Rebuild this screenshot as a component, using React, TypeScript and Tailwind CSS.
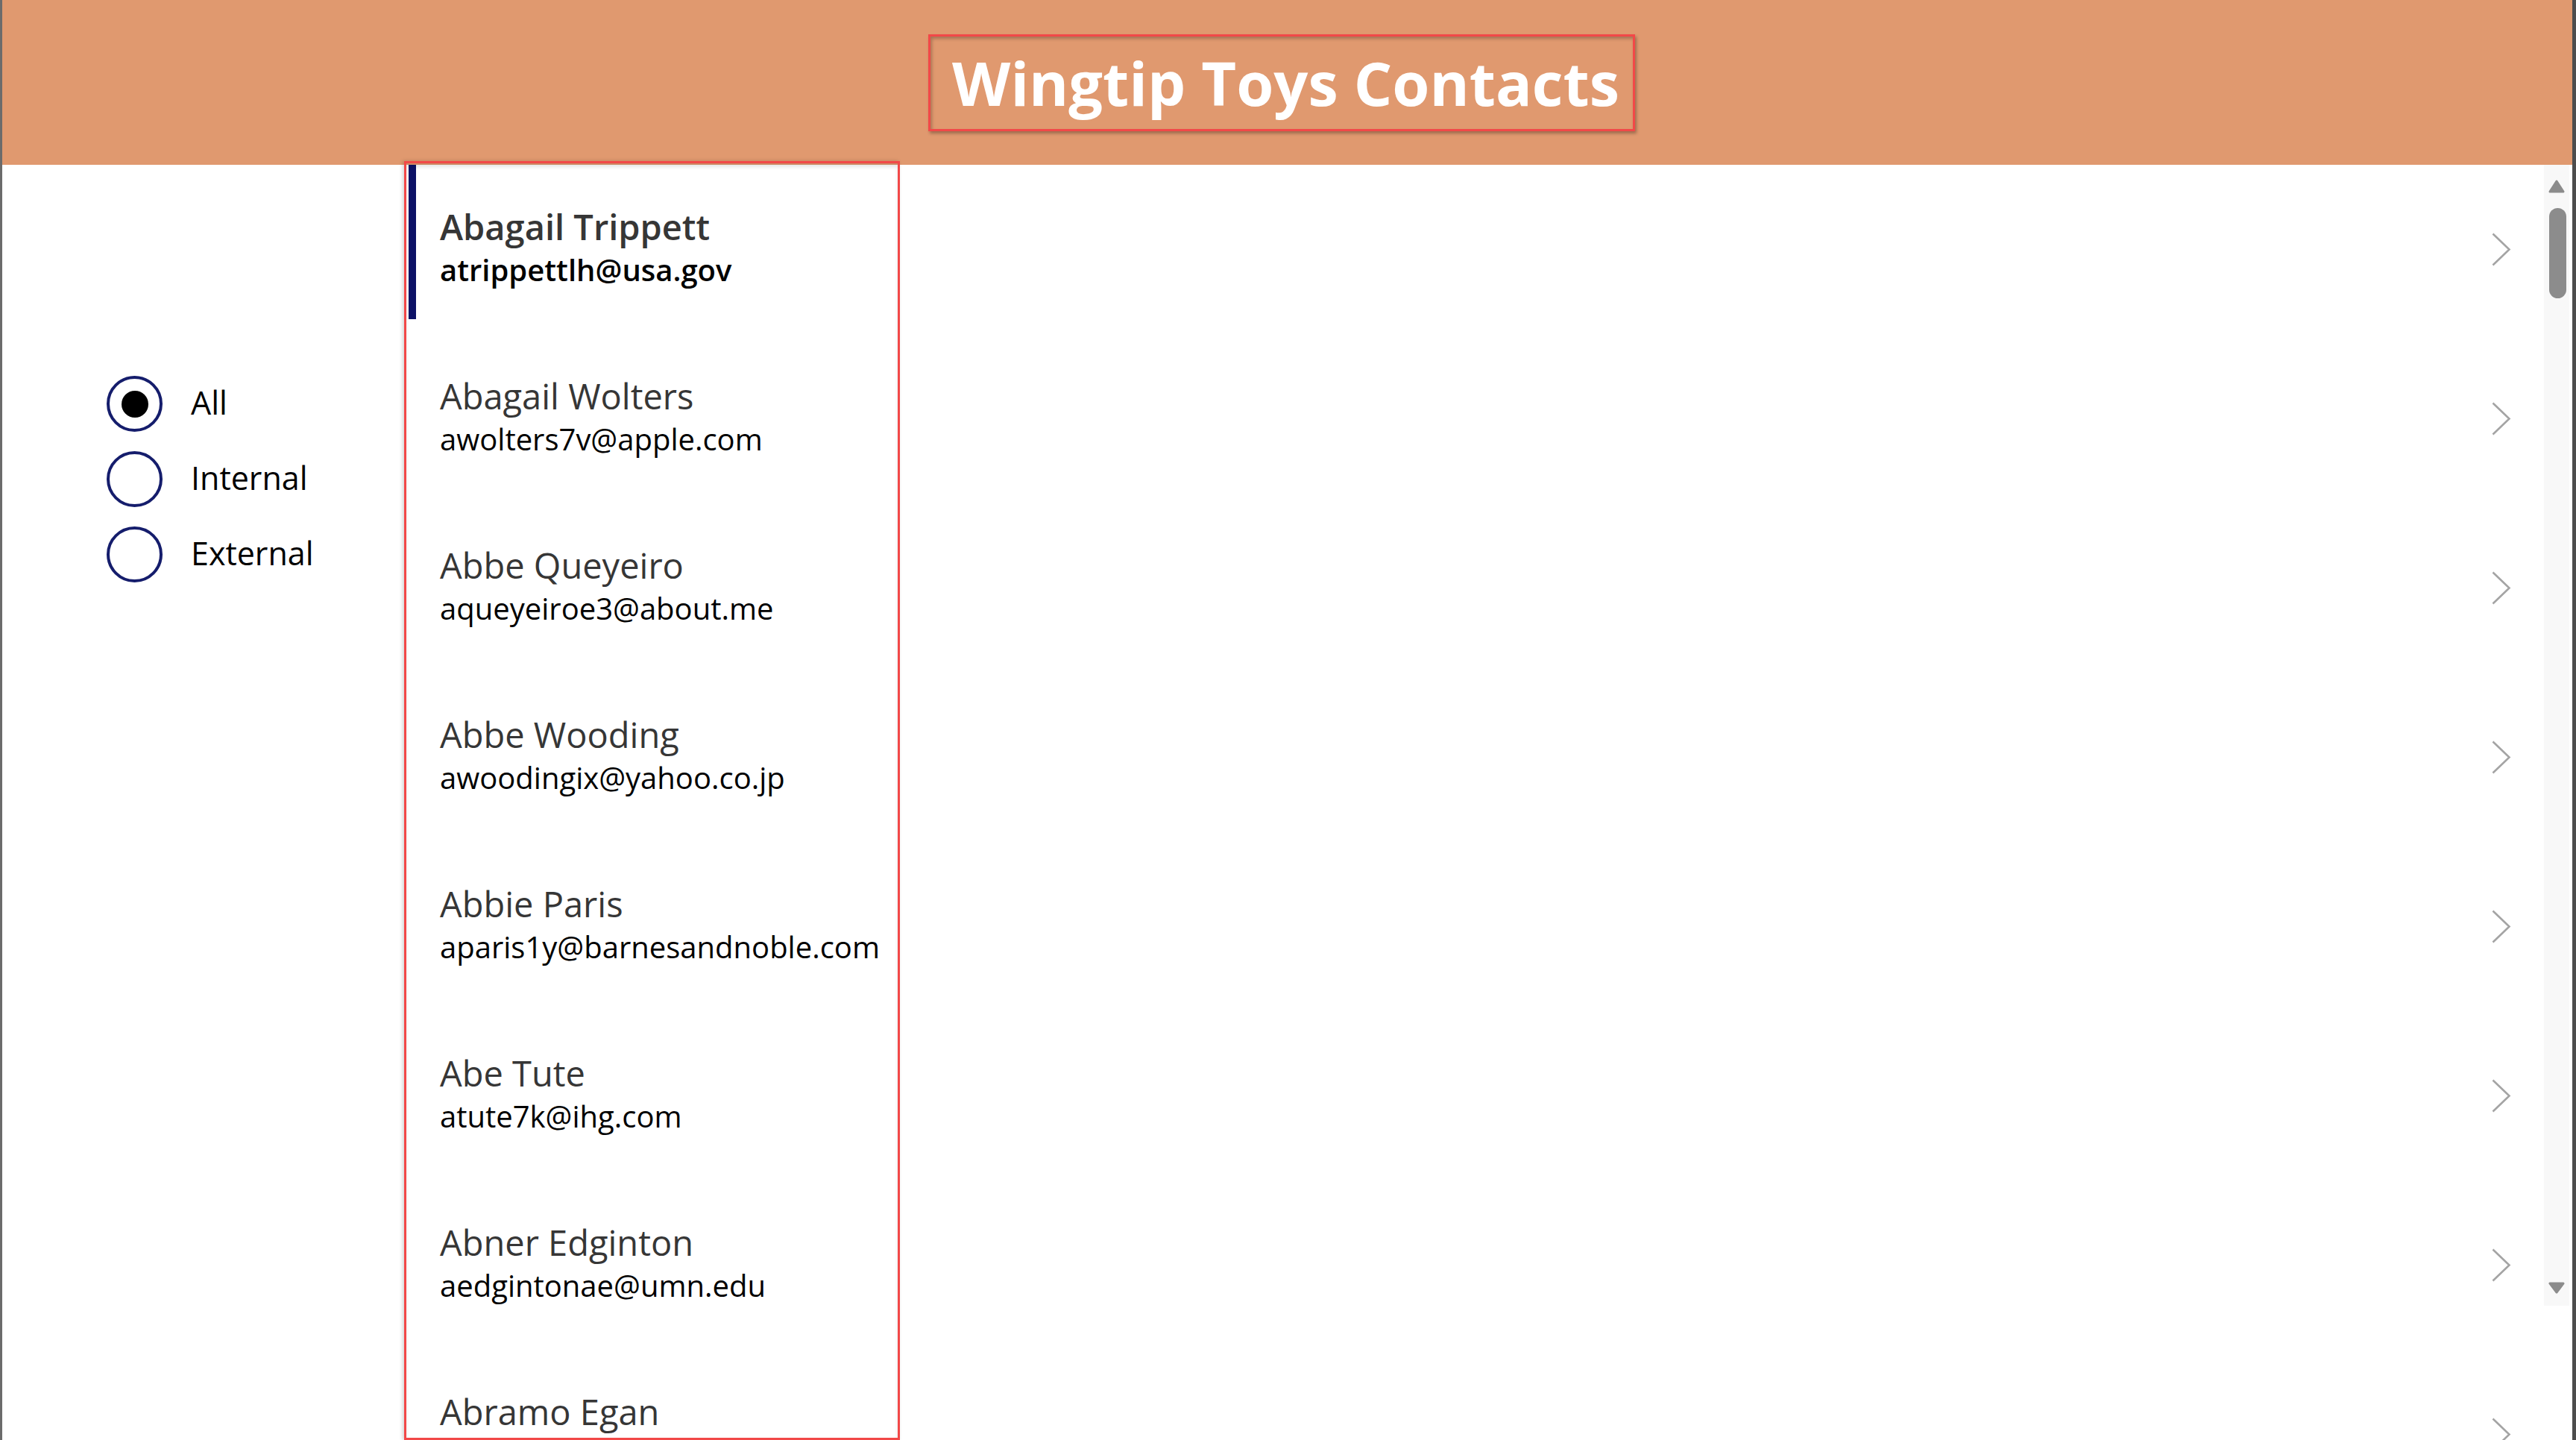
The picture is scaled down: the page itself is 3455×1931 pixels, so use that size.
const contacts = [
  { name: "Abagail Trippett", email: "atrippettlh@usa.gov" },
  { name: "Abagail Wolters", email: "awolters7v@apple.com" },
  { name: "Abbe Queyeiro", email: "aqueyeiroe3@about.me" },
  { name: "Abbe Wooding", email: "awoodingix@yahoo.co.jp" },
  { name: "Abbie Paris", email: "aparis1y@barnesandnoble.com" },
  { name: "Abe Tute", email: "atute7k@ihg.com" },
  { name: "Abner Edginton", email: "aedgintonae@umn.edu" },
  { name: "Abramo Egan", email: "aeganqq@wikimedia.org" },
];

const filters = ["All", "Internal", "External"];

function Chevron() {
  return (
    <svg width="26" height="45" viewBox="0 0 26 45" fill="none">
      <polyline points="1.5,1.5 23.5,22.5 1.5,43.5" stroke="#a4a4a4" strokeWidth="2.6" />
    </svg>
  );
}

function RadioGroup() {
  return (
    <div className="flex w-[539px] shrink-0 flex-col pl-[140px] pt-[270px]">
      {filters.map((label, i) => (
        <div key={label} className="flex h-[101px] items-center gap-[38px]">
          <div className="flex h-[75px] w-[75px] items-center justify-center rounded-full border-[4px] border-[#151d6c]">
            {i === 0 && <div className="h-[36px] w-[36px] rounded-full bg-black" />}
          </div>
          <span className="pb-[4px] text-[43px] leading-[59px] text-black">{label}</span>
        </div>
      ))}
    </div>
  );
}

function Gallery() {
  return (
    <div className="relative flex-1">
      <div className="h-full overflow-hidden">
        {contacts.map((c, i) => (
          <div key={c.email} className="flex h-[227px]">
            <div className={`ml-[6px] h-[207px] w-[10px] shrink-0 ${i === 0 ? "bg-[#0d1166]" : ""}`} />
            <div className="flex-1 pl-[32px] pt-[53px]">
              <div
                className={`text-[47px] leading-[61px] text-[#363636] ${i === 0 ? "font-semibold" : "font-normal"}`}
              >
                {c.name}
              </div>
              <div className={`-mt-px text-[40px] leading-[56px] text-black ${i === 0 ? "font-semibold" : ""}`}>
                {c.email}
              </div>
            </div>
            <div className="mr-[44px] self-center">
              <Chevron />
            </div>
          </div>
        ))}
      </div>
      <div className="pointer-events-none absolute bottom-0 left-0 top-[-5px] w-[665px] border-[3px] border-[#f24848] shadow-[-2px_0_5px_rgba(0,0,0,0.18),inset_0_5px_5px_rgba(0,0,0,0.1)]" />
    </div>
  );
}

function Scrollbar() {
  return (
    <div className="flex h-[1530px] w-[34px] shrink-0 flex-col items-center bg-[#f8f8f8] pb-[16px] pt-[20px]">
      <svg width="22" height="18" viewBox="0 0 22 18">
        <path d="M11 2 L20 16 L2 16 Z" fill="#8c8c8c" stroke="#8c8c8c" strokeWidth="3" strokeLinejoin="round" />
      </svg>
      <div className="ml-[3px] mt-[20px] h-[121px] w-[23px] rounded-full bg-[#8c8c8c]" />
      <div className="flex-1" />
      <svg width="22" height="16" viewBox="0 0 22 16">
        <path d="M2 2 L20 2 L11 14 Z" fill="#8c8c8c" stroke="#8c8c8c" strokeWidth="3" strokeLinejoin="round" />
      </svg>
    </div>
  );
}

export default function App() {
  return (
    <div className="flex h-[1931px] w-[3455px] overflow-hidden bg-white font-['Open_Sans',sans-serif]">
      <div className="w-[3px] shrink-0 bg-[#6b6b6b]" />
      <div className="flex min-w-0 flex-1 flex-col">
        <header className="flex h-[221px] shrink-0 items-center justify-center bg-[#e0996f] pr-[16px]">
          <div className="flex h-[130px] w-[948px] items-center justify-center border-[3px] border-[#f24848] pl-[12px] shadow-[2px_3px_4px_rgba(0,0,0,0.3),inset_2px_3px_4px_rgba(0,0,0,0.25)]">
            <h1 className="text-[81px] font-bold leading-none text-white">Wingtip Toys Contacts</h1>
          </div>
        </header>
        <div className="flex min-h-0 flex-1">
          <RadioGroup />
          <Gallery />
          <Scrollbar />
          <div className="w-[4px] shrink-0" />
        </div>
      </div>
      <div className="w-[5px] shrink-0 bg-[#4d4d4d]" />
    </div>
  );
}
